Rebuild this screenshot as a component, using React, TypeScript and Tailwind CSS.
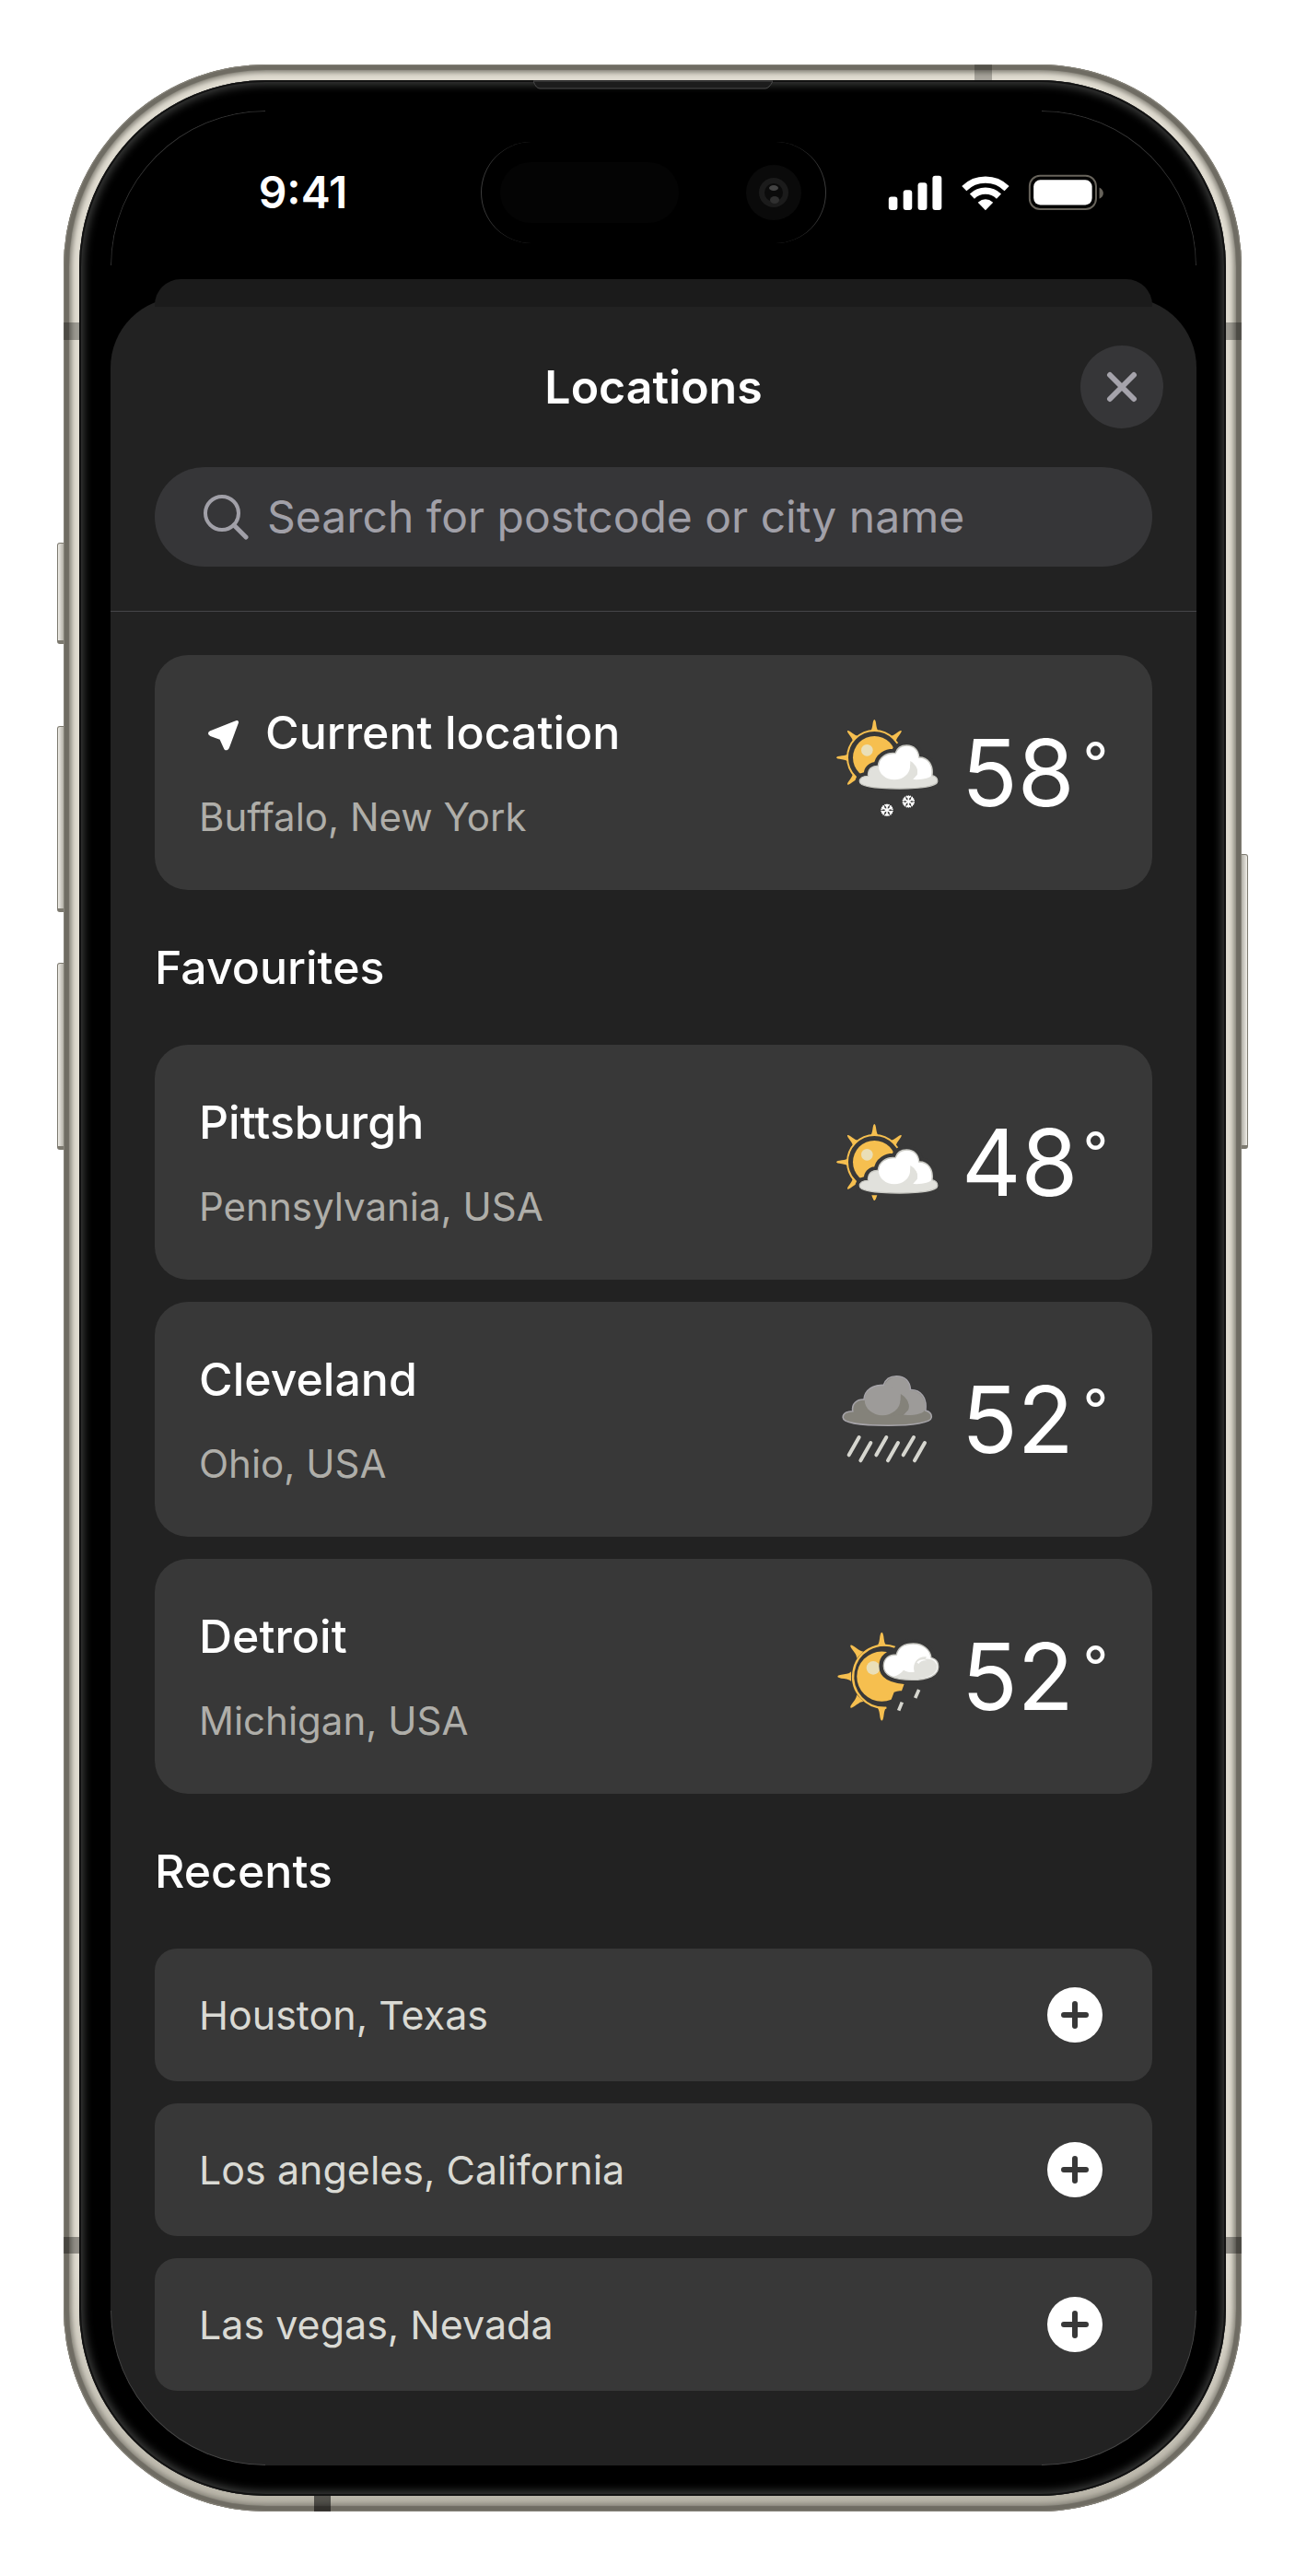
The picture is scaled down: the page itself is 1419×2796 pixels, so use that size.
import type { ReactNode } from "react";

type Weather = "snow" | "cloudy" | "rain" | "shower";

interface Place {
  name: string;
  region: string;
  temp: number;
  weather: Weather;
}

const current: Place = { name: "Current location", region: "Buffalo, New York", temp: 58, weather: "snow" };

const favourites: Place[] = [
  { name: "Pittsburgh", region: "Pennsylvania, USA", temp: 48, weather: "cloudy" },
  { name: "Cleveland", region: "Ohio, USA", temp: 52, weather: "rain" },
  { name: "Detroit", region: "Michigan, USA", temp: 52, weather: "shower" },
];

const recents = ["Houston, Texas", "Los angeles, California", "Las vegas, Nevada"];

const CLOUD =
  "M160 325C160 312 174 307 188 307C184 286 200 273 220 274C222 246 248 230 276 233C282 214 297 207 313 207C336 207 352 222 353 246C382 245 401 270 396 305C408 308 414 316 413 325C412 340 360 348 290 348C220 348 160 342 160 325Z";

const SMALL_CLOUD =
  "M238 205C238 180 255 168 280 168C285 145 305 132 335 132C365 132 390 150 393 178C410 182 417 195 416 210C415 235 385 250 330 250C270 250 238 235 238 205Z";

const RAY = "M-14 -86Q-8 -90 -6 -106Q-4 -124 0 -124Q4 -124 6 -106Q8 -90 14 -86Z";

function Rays({ angles }: { angles: number[] }) {
  return (
    <g fill="#f6bf4f">
      {angles.map((a) => (
        <path key={a} d={RAY} transform={`rotate(${a})`} />
      ))}
    </g>
  );
}

function Cloud({ base, light, edge }: { base: string; light: string; edge: string }) {
  return (
    <>
      <path d={CLOUD} fill={base} />
      <circle cx="314" cy="247" r="38" fill={light} />
      <path d="M325 258C345 270 352 292 346 302L333 318C362 320 392 314 394 303C398 270 380 246 348 248Z" fill={light} />
      <path d="M325 258C326 290 310 310 288 319L333 318L347 303C352 285 342 268 325 258Z" fill={base} />
      <ellipse cx="273" cy="275" rx="51" ry="44" fill={light} />
      <path d={CLOUD} fill="none" stroke={edge} strokeWidth="4" />
    </>
  );
}

function Snowflake({ x, y }: { x: number; y: number }) {
  return (
    <g transform={`translate(${x} ${y})`} stroke="#fff" strokeWidth="5" strokeLinecap="round" fill="none">
      {[0, 60, 120, 180, 240, 300].map((a) => (
        <path key={a} d="M0 0V-18M-6 -17L0 -11L6 -17" transform={`rotate(${a})`} />
      ))}
    </g>
  );
}

function SunCloud({ snow }: { snow?: boolean }) {
  return (
    <svg viewBox={snow ? "75 123 345 345" : "75 75 345 345"} className="size-[115px] shrink-0" aria-hidden="true">
      <g transform="translate(208 247)">
        <circle r="88" fill="none" stroke="#f6bf4f" strokeWidth="6" />
        <Rays angles={snow ? [0, 45, 225, 270, 315] : [0, 45, 180, 225, 270, 315]} />
        <circle r="70" fill="#f6bf4f" />
        <circle cx="-24" cy="-24" r="19" fill="#eadfb8" />
      </g>
      <path d={CLOUD} fill="#383838" stroke="#383838" strokeWidth="28" />
      {!snow && <path d="M199 355H217Q212 371 208 372Q204 371 199 355Z" fill="#f6bf4f" />}
      <Cloud base="#e1e1dc" light="#ffffff" edge="#c9c9c3" />
      {snow && (
        <>
          <Snowflake x={319} y={390} />
          <Snowflake x={249} y={418} />
        </>
      )}
    </svg>
  );
}

function RainCloud() {
  return (
    <svg viewBox="75 69 345 345" className="size-[115px] shrink-0" aria-hidden="true">
      <g transform="translate(-77 -135) scale(1.14)">
        <Cloud base="#84827a" light="#9d9b99" edge="#a6a4a9" />
      </g>
      <path
        d="M158 300L125 358M196 318L163 376M247 300L214 358M285 318L252 376M336 300L302 358M372 318L339 376"
        stroke="#d6d6cf"
        strokeWidth="12"
        strokeLinecap="round"
      />
    </svg>
  );
}

function SunShower() {
  return (
    <svg viewBox="75 66 345 345" className="size-[115px] shrink-0" aria-hidden="true">
      <g transform="translate(232 239) scale(1.16)">
        <Rays angles={[0, 180, 225, 270, 315]} />
        <circle r="70" fill="#f6bf4f" />
        <circle cx="-24" cy="-24" r="19" fill="#eadfb8" />
      </g>
      <path d="M277 144A102 102 0 1 0 247 341" fill="none" stroke="#f6bf4f" strokeWidth="7" />
      <path d="M307 258L297 286Q285 284 272 290L260 322L330 340V258Z" fill="#383838" />
      <path d={SMALL_CLOUD} fill="#fff" stroke="#383838" strokeWidth="30" />
      <path d={SMALL_CLOUD} fill="#fff" />
      <path
        d="M268 240C285 235 296 228 303 218C315 226 328 226 338 224C330 195 350 172 378 175L374 182C396 180 410 190 412 207C412 232 380 247 330 248C305 248 285 246 268 240Z"
        fill="#e1e1dc"
      />
      <path d="M346 193C356 181 372 182 378 187C366 186 356 190 352 198Z" fill="#fff" />
      <path d={SMALL_CLOUD} fill="none" stroke="#c6c6c0" strokeWidth="4" />
      <path d="M298 323L287 350M353 282L341 309" stroke="#d6d6cf" strokeWidth="11" />
    </svg>
  );
}

function WeatherIcon({ weather }: { weather: Weather }) {
  if (weather === "rain") return <RainCloud />;
  if (weather === "shower") return <SunShower />;
  return <SunCloud snow={weather === "snow"} />;
}

function StatusIcons() {
  return (
    <svg viewBox="130 415 712 121" className="h-10 w-[237px]" aria-hidden="true">
      <g fill="#fff">
        <rect x="133" y="489" width="29" height="44" rx="9" />
        <rect x="181" y="467" width="29" height="66" rx="9" />
        <rect x="229" y="443" width="30" height="90" rx="9" />
        <rect x="277" y="420" width="30" height="113" rx="9" />
        <path d="M451 534L426 508Q451 487 476 508Z" />
        <rect x="609" y="434" width="192" height="82" rx="22" />
      </g>
      <path d="M381 462A100 100 0 0 1 521 462M407 488A63 63 0 0 1 495 488" fill="none" stroke="#fff" strokeWidth="22" />
      <rect x="596" y="420" width="218" height="110" rx="34" fill="none" stroke="#67635b" strokeWidth="6" />
      <path d="M825 459Q838 466 838 478Q838 490 825 496Z" fill="#67635b" />
    </svg>
  );
}

function StatusBar() {
  return (
    <div className="grid h-[183px] grid-cols-[1fr_375px_1fr] items-center pb-[5px]">
      <div className="pl-4 text-center text-[48px] leading-[60px] font-semibold text-white">9:41</div>
      {/* Dynamic island */}
      <div className="flex h-[110px] items-center justify-between rounded-full border-x border-[#3c3c3c] pr-[26px] pl-5">
        <div className="h-[66px] w-[194px] rounded-full bg-[#040404]" />
        <svg viewBox="0 0 60 60" className="size-15" aria-hidden="true">
          <circle cx="30" cy="30" r="30" fill="#0a0a0a" />
          <circle cx="30" cy="30" r="16" fill="#1b1b1b" />
          <circle cx="30" cy="30" r="10" fill="#0b0b0b" />
          <ellipse cx="30" cy="25" rx="5" ry="3" fill="#444" />
          <ellipse cx="31" cy="38" rx="5" ry="4" fill="#303030" />
        </svg>
      </div>
      <div className="flex justify-center pr-[34px]">
        <StatusIcons />
      </div>
    </div>
  );
}

function PlaceCard({ place, icon }: { place: Place; icon?: ReactNode }) {
  return (
    <li className="flex items-center justify-between rounded-[36px] bg-[#383838] p-12">
      <div className="flex flex-col gap-6">
        <h3 className="flex items-center gap-6 text-[50px] leading-[72px] font-medium text-white">
          {icon}
          {place.name}
        </h3>
        <p className="text-[42px] leading-[63px] text-[#afaea9]">{place.region}</p>
      </div>
      <div className="flex items-center">
        <WeatherIcon weather={place.weather} />
        <p className="flex pl-6 text-[100px] leading-[120px] text-white">
          <span className="w-[126px]">{place.temp}</span>
          <span className="w-[33px] text-right text-[60px] leading-[96px]">°</span>
        </p>
      </div>
    </li>
  );
}

function SectionTitle({ children }: { children: ReactNode }) {
  return <h2 className="py-12 text-[50px] leading-[72px] font-medium text-white">{children}</h2>;
}

function LocationArrow() {
  return (
    <svg viewBox="0 0 48 48" className="size-12" aria-hidden="true">
      <path
        d="M41 13L13 24Q11 25 13 26L24 30L29 41Q30 42 31 40Z"
        fill="#fff"
        stroke="#fff"
        strokeWidth="4"
        strokeLinejoin="round"
      />
    </svg>
  );
}

function Locations() {
  return (
    <main className="-mt-[10px] rounded-t-[76px] bg-[#222222]">
      <header className="border-b border-[#454548] pt-[52px] pb-12">
        <div className="grid grid-cols-[90px_1fr_90px] items-center px-9">
          <h1 className="col-start-2 text-center text-[50px] leading-[72px] font-semibold text-white">Locations</h1>
          <button aria-label="Close" className="flex size-[90px] items-center justify-center rounded-full bg-[#363638]">
            <svg viewBox="0 0 34 34" className="size-[34px]" aria-hidden="true">
              <path d="M4 4L30 30M30 4L4 30" stroke="#a5a3ab" strokeWidth="6" strokeLinecap="round" />
            </svg>
          </button>
        </div>
        <label className="mx-12 mt-[42px] flex h-[108px] items-center gap-[18px] rounded-full bg-[#363638] pr-12 pl-[52px]">
          <svg viewBox="0 0 52 52" className="size-[52px] shrink-0" aria-hidden="true">
            <circle cx="21" cy="22" r="18" fill="none" stroke="#a1a0a8" strokeWidth="4" />
            <path d="M34 35L47 48" stroke="#a1a0a8" strokeWidth="5" strokeLinecap="round" />
          </svg>
          <input
            type="search"
            aria-label="Search for postcode or city name"
            placeholder="Search for postcode or city name"
            className="h-[72px] w-full bg-transparent text-[48px] leading-[72px] text-white outline-none placeholder:text-[#a1a0a8]"
          />
        </label>
      </header>

      <div className="px-12 pt-[47px] pb-[81px]">
        <ul>
          <PlaceCard place={current} icon={<LocationArrow />} />
        </ul>

        <SectionTitle>Favourites</SectionTitle>
        <ul className="flex flex-col gap-6">
          {favourites.map((place) => (
            <PlaceCard key={place.name} place={place} />
          ))}
        </ul>

        <SectionTitle>Recents</SectionTitle>
        <ul className="flex flex-col gap-6">
          {recents.map((name) => (
            <li
              key={name}
              className="flex h-36 items-center justify-between rounded-3xl bg-[#383838] pr-[54px] pl-12 text-[43px] leading-[63px] text-[#dadad4]"
            >
              {name}
              <button aria-label={`Add ${name}`} className="size-15 rounded-full bg-white">
                <svg viewBox="0 0 60 60" className="size-15" aria-hidden="true">
                  <path d="M30 18V42M18 30H42" stroke="#383838" strokeWidth="6" strokeLinecap="round" />
                </svg>
              </button>
            </li>
          ))}
        </ul>
      </div>
    </main>
  );
}

export default function App() {
  return (
    <div className="min-h-screen bg-white py-[70px] pr-[71px] pl-[69px] font-['Inter',sans-serif]">
      <div className="relative">
        {/* Side buttons */}
        <div className="absolute top-[519px] -left-[7px] h-[110px] w-3 rounded-l-[3px] border border-b-4 border-[#7d7a70] bg-linear-to-r from-[#f0eee8] to-[#8b887e]" />
        <div className="absolute top-[718px] -left-[7px] h-[202px] w-3 rounded-l-[3px] border border-b-4 border-[#7d7a70] bg-linear-to-r from-[#f0eee8] to-[#8b887e]" />
        <div className="absolute top-[975px] -left-[7px] h-[203px] w-3 rounded-l-[3px] border border-b-4 border-[#7d7a70] bg-linear-to-r from-[#f0eee8] to-[#8b887e]" />
        <div className="absolute top-[857px] -right-[7px] h-[320px] w-3 rounded-r-[3px] border border-b-4 border-[#7d7a70] bg-linear-to-l from-[#f0eee8] to-[#8b887e]" />

        {/* Metal frame */}
        <div className="relative rounded-[220px] bg-linear-to-b from-[#dfdbd0] from-90% to-[#b7b3a7] p-[17px] shadow-[inset_0_0_0_1px_#87847b,inset_0_0_1px_6px_#6f6c63,inset_0_0_5px_9px_#8c897f]">
          <div className="absolute top-[280px] left-0 h-[19px] w-[17px] bg-black/30" />
          <div className="absolute top-[280px] right-0 h-[19px] w-[17px] bg-black/30" />
          <div className="absolute bottom-[280px] left-0 h-[18px] w-[17px] bg-black/35" />
          <div className="absolute right-0 bottom-[280px] h-[18px] w-[17px] bg-black/35" />
          <div className="absolute top-0 right-[271px] h-[17px] w-[19px] bg-black/25" />
          <div className="absolute bottom-0 left-[272px] h-[17px] w-[18px] bg-black/55" />

          {/* Bezel */}
          <div className="relative rounded-[203px] bg-black py-[33px] pr-[32px] pl-[34px] shadow-[inset_0_0_0_2px_#121212,inset_0_0_10px_5px_#3c3d3c]">
            <svg
              viewBox="0 0 260 10"
              className="absolute top-0 left-1/2 h-[10px] w-[260px] -translate-x-1/2"
              aria-hidden="true"
            >
              <path d="M0 1Q3 9 7 9H252Q256 9 260 1Z" fill="#1c1c1c" stroke="#4a4a4a" />
            </svg>

            {/* Screen */}
            <div className="relative overflow-hidden rounded-[168px] bg-black">
              <StatusBar />
              <div className="relative mx-12 h-[30px] rounded-t-[28px] bg-[#1b1b1b]" />
              <Locations />
              <div className="absolute top-0 left-0 size-[168px] rounded-tl-[168px] border-t border-l border-[#333]" />
              <div className="absolute top-0 right-0 size-[168px] rounded-tr-[168px] border-t border-r border-[#333]" />
              <div className="absolute bottom-0 left-0 size-[168px] rounded-bl-[168px] border-b border-l border-[#444]" />
              <div className="absolute right-0 bottom-0 size-[168px] rounded-br-[168px] border-r border-b border-[#444]" />
            </div>
          </div>
        </div>
      </div>
    </div>
  );
}
